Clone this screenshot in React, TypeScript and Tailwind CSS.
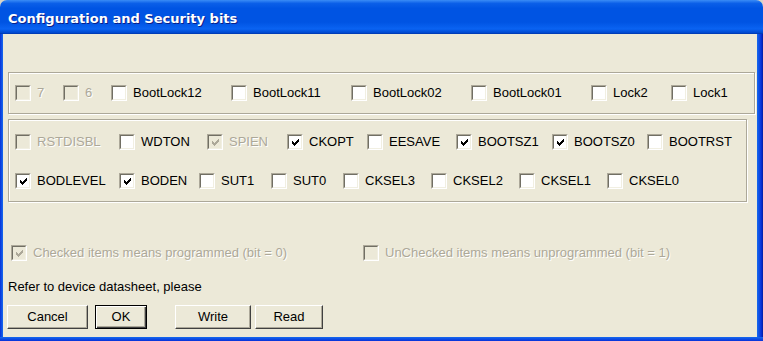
import React from "react";

type Item = { label: string; w: number; checked?: boolean; disabled?: boolean };

const Check = ({ disabled }: { disabled?: boolean }) => (
  <svg width="7" height="7" viewBox="0 0 7 7" shapeRendering="crispEdges" className={disabled ? "fill-[#aca899]" : "fill-black"}>
    <rect x="6" y="0" width="1" height="1" />
    <rect x="5" y="1" width="2" height="1" />
    <rect x="0" y="2" width="1" height="1" />
    <rect x="4" y="2" width="3" height="1" />
    <rect x="0" y="3" width="2" height="1" />
    <rect x="3" y="3" width="3" height="1" />
    <rect x="0" y="4" width="5" height="1" />
    <rect x="1" y="5" width="3" height="1" />
    <rect x="2" y="6" width="1" height="1" />
  </svg>
);

const Box = ({ checked, disabled }: { checked?: boolean; disabled?: boolean }) => (
  <span className="w-[16px] h-[16px] flex-none flex border border-t-[#aca899] border-l-[#aca899] border-r-white border-b-white">
    <span
      className={
        "flex-1 flex items-center justify-center border border-t-[#716f64] border-l-[#716f64] border-r-[#f1efe2] border-b-[#f1efe2] " +
        (disabled ? "bg-[#ece9d8]" : "bg-white")
      }
    >
      {checked && <Check disabled={disabled} />}
    </span>
  </span>
);

const CheckItem = ({ label, w, checked, disabled }: Item) => (
  <div className="flex items-center flex-none" style={{ width: w }}>
    <Box checked={checked} disabled={disabled} />
    <span
      className={
        "ml-[6px] text-[13px] leading-[16px] whitespace-nowrap " +
        (disabled ? "text-[#aca899] [text-shadow:1px_1px_0_#fff]" : "text-black")
      }
    >
      {label}
    </span>
  </div>
);

const row1: Item[] = [
  { label: "7", w: 48, disabled: true },
  { label: "6", w: 48, disabled: true },
  { label: "BootLock12", w: 120 },
  { label: "BootLock11", w: 120 },
  { label: "BootLock02", w: 120 },
  { label: "BootLock01", w: 120 },
  { label: "Lock2", w: 80 },
  { label: "Lock1", w: 60 },
];

const row2: Item[] = [
  { label: "RSTDISBL", w: 104, disabled: true },
  { label: "WDTON", w: 88 },
  { label: "SPIEN", w: 80, checked: true, disabled: true },
  { label: "CKOPT", w: 80, checked: true },
  { label: "EESAVE", w: 89 },
  { label: "BOOTSZ1", w: 96, checked: true },
  { label: "BOOTSZ0", w: 95, checked: true },
  { label: "BOOTRST", w: 90 },
];

const row3: Item[] = [
  { label: "BODLEVEL", w: 104, checked: true },
  { label: "BODEN", w: 80, checked: true },
  { label: "SUT1", w: 72 },
  { label: "SUT0", w: 72 },
  { label: "CKSEL3", w: 88 },
  { label: "CKSEL2", w: 88 },
  { label: "CKSEL1", w: 88 },
  { label: "CKSEL0", w: 80 },
];

const Button = ({ label, w, isDefault }: { label: string; w: number; isDefault?: boolean }) => (
  <button
    className={
      "h-[24px] flex-none flex items-center justify-center text-[13px] text-black bg-[#ece9d8] " +
      (isDefault
        ? "border border-black shadow-[inset_1px_1px_0_#fff,inset_-1px_-1px_0_#404040,inset_-2px_-2px_0_#aca899]"
        : "border border-t-white border-l-white border-r-[#404040] border-b-[#404040] shadow-[inset_-1px_-1px_0_#aca899]")
    }
    style={{ width: w }}
  >
    {label}
  </button>
);

export default function App() {
  return (
    <div className="w-[763px] h-[341px] overflow-hidden bg-[#d8d4c8] flex flex-col font-['Liberation_Sans',Arial,sans-serif]">
      <div className="h-[34px] flex-none rounded-t-[7px] bg-[linear-gradient(180deg,#3a8cf6_0%,#0b5fe8_10%,#0054e3_25%,#0054e3_65%,#0a63f2_85%,#0049d0_96%,#0035a8_100%)] flex items-center pl-[8px] pt-[4px]">
        <span className="text-white font-bold text-[13px] font-['DejaVu_Sans',sans-serif] [text-shadow:1px_1px_0_#0a1f8a]">
          Configuration and Security bits
        </span>
      </div>
      <div className="flex flex-1">
        <div className="w-[3px] bg-[linear-gradient(90deg,#0831d9,#166aee)]" />
        <div className="flex-1 bg-[#ece9d8] flex flex-col">
          <div className="mt-[38px] ml-[5px] mr-[2px] h-[42px] border border-[#aca899] shadow-[1px_1px_0_#fff,inset_1px_1px_0_#fff] flex items-center pl-[6px]">
            {row1.map((it) => (
              <CheckItem key={it.label} {...it} />
            ))}
          </div>
          <div className="mt-[5px] ml-[5px] w-[739px] h-[83px] border border-[#aca899] shadow-[1px_1px_0_#fff,inset_1px_1px_0_#fff] flex flex-col pl-[6px] pt-[14px] gap-[23px]">
            <div className="flex">
              {row2.map((it) => (
                <CheckItem key={it.label} {...it} />
              ))}
            </div>
            <div className="flex">
              {row3.map((it) => (
                <CheckItem key={it.label} {...it} />
              ))}
            </div>
          </div>
          <div className="mt-[43px] ml-[8px] flex">
            <CheckItem label="Checked items means programmed (bit = 0)" w={352} checked disabled />
            <CheckItem label="UnChecked items means unprogrammed (bit = 1)" w={330} disabled />
          </div>
          <div className="mt-[18px] ml-[5px] text-[13px] leading-[16px] text-black">
            Refer to device datasheet, please
          </div>
          <div className="mt-[10px] ml-[4px] flex">
            <Button label="Cancel" w={81} />
            <div className="ml-[7px]">
              <Button label="OK" w={52} isDefault />
            </div>
            <div className="ml-[28px]">
              <Button label="Write" w={76} />
            </div>
            <div className="ml-[4px]">
              <Button label="Read" w={68} />
            </div>
          </div>
        </div>
        <div className="w-[6px] bg-[linear-gradient(90deg,#166aee,#0831d9_70%,#001ea0)]" />
      </div>
      <div className="h-[4px] flex-none bg-[linear-gradient(180deg,#166aee,#0831d9)]" />
    </div>
  );
}
